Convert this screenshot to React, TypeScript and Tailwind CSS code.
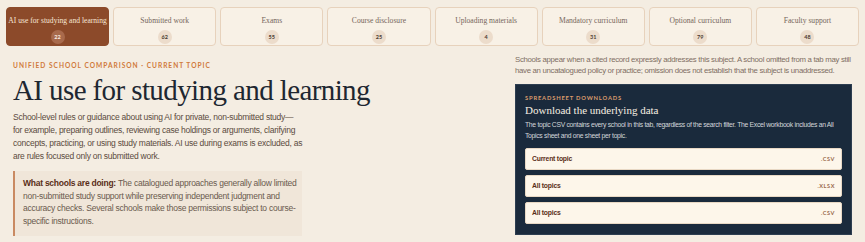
import React from "react";

const tabs = [
  { label: "AI use for studying and learning", count: 22, active: true },
  { label: "Submitted work", count: 62 },
  { label: "Exams", count: 55 },
  { label: "Course disclosure", count: 25 },
  { label: "Uploading materials", count: 4 },
  { label: "Mandatory curriculum", count: 31 },
  { label: "Optional curriculum", count: 79 },
  { label: "Faculty support", count: 48 },
];

const downloads = [
  { label: "Current topic", ext: ".CSV" },
  { label: "All topics", ext: ".XLSX" },
  { label: "All topics", ext: ".CSV" },
];

const serif = "font-['Liberation_Serif',serif]";
const body = "font-['Liberation_Sans',sans-serif]";
const sans = "font-['Lato','Liberation_Sans',sans-serif]";

export default function App() {
  return (
    <div className={`w-[865px] h-[242px] overflow-hidden bg-[#f4ede2] ${body}`}>
      {/* Topic tabs */}
      <div className="grid grid-cols-8 gap-1 px-1.5 pt-[7px]">
        {tabs.map((t) => (
          <button
            key={t.label}
            className={`h-[39px] rounded-[4px] border flex flex-col items-center justify-start pt-[7px] ${
              t.active
                ? "bg-[#8c4a2a] border-[#8c4a2a] text-[#f6e6d6]"
                : "bg-[#f8f1e6] border-[#e7d2bc] text-[#76665b]"
            }`}
          >
            <span className={`${serif} text-[7.6px] leading-[11px] whitespace-nowrap`}>
              {t.label}
            </span>
            <span
              className={`${sans} mt-[4px] w-[14px] h-[14px] rounded-full flex items-center justify-center text-[5.5px] font-bold ${
                t.active ? "bg-[#a86a4c] text-[#f8ece0]" : "bg-[#ecdccb] text-[#4a3a30]"
              }`}
            >
              {t.count}
            </span>
          </button>
        ))}
      </div>

      <div className="flex justify-between px-[13px] pt-[8px]">
        {/* Left column */}
        <div className="w-[300px]">
          <div
            className={`${sans} pt-[6px] text-[6.6px] font-bold tracking-[0.15em] text-[#d07a3a] leading-[10px]`}
          >
            UNIFIED SCHOOL COMPARISON · CURRENT TOPIC
          </div>
          <h1
            className={`${serif} whitespace-nowrap text-[29px] leading-[36px] tracking-[-0.6px] text-[#1e2731] mt-[2px]`}
          >
            AI use for studying and learning
          </h1>
          <p className="mt-[3px] w-[292px] text-[8.5px] tracking-[-0.25px] leading-[13px] text-[#5b4b40]">
            School-level rules or guidance about using AI for private, non-submitted study—
            <br />
            for example, preparing outlines, reviewing case holdings or arguments, clarifying
            concepts, practicing, or using study materials. AI use during exams is excluded, as
            are rules focused only on submitted work.
          </p>
          <div className="mt-[8px] w-[289px] border-l-2 border-[#c98a62] bg-[#f0e6d9] pl-[8px] pr-[4px] pt-[6px] pb-[8px] text-[8.5px] tracking-[-0.25px] leading-[12.7px] text-[#6a5a4e]">
            <span className="font-bold text-[#5a2e18]">What schools are doing:</span> The
            catalogued approaches generally allow limited non-submitted study support while
            preserving independent judgment and accuracy checks. Several schools make those
            permissions subject to course-specific instructions.
          </div>
        </div>

        {/* Right column */}
        <div className="w-[337px]">
          <p className="text-[7.8px] tracking-[-0.3px] leading-[11px] text-[#7f6e62]">
            Schools appear when a cited record expressly addresses this subject. A school omitted
            from a tab may still have an uncatalogued policy or practice; omission does not
            establish that the subject is unaddressed.
          </p>
          <div className="mt-[8px] bg-[#1a2a3c] border border-[#2c3d50] px-[9px] pt-[9px] pb-[10px]">
            <div
              className={`${sans} text-[5.8px] font-bold tracking-[0.14em] text-[#dc9c6c] leading-[8px]`}
            >
              SPREADSHEET DOWNLOADS
            </div>
            <h2 className={`${serif} text-[11px] leading-[15px] text-[#f7efe2] mt-[1px]`}>
              Download the underlying data
            </h2>
            <p className="mt-[2px] text-[6.8px] tracking-[-0.3px] leading-[10.5px] text-[#d3d6da]">
              The topic CSV contains every school in this tab, regardless of the search filter.
              The Excel workbook includes an All Topics sheet and one sheet per topic.
            </p>
            <div className="mt-[7px] flex flex-col gap-[5px]">
              {downloads.map((d, i) => (
                <a
                  key={i}
                  href="#"
                  className="h-[22px] rounded-[2px] bg-[#fdf6ea] border border-[#e8d8c4] flex items-center justify-between px-[6px]"
                >
                  <span className="text-[6.8px] tracking-[-0.2px] font-bold text-[#5a2e18]">
                    {d.label}
                  </span>
                  <span
                    className={`${sans} text-[5.6px] font-bold tracking-[0.1em] text-[#9a6a4c]`}
                  >
                    {d.ext}
                  </span>
                </a>
              ))}
            </div>
          </div>
        </div>
      </div>
    </div>
  );
}
